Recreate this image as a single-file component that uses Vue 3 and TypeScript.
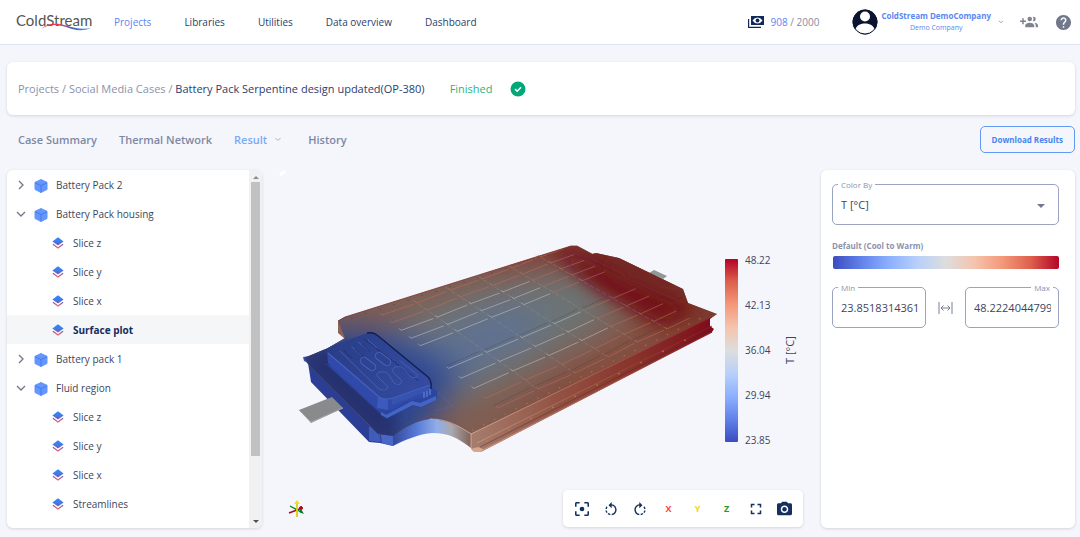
<script setup lang="ts">
import { ref } from 'vue'

interface TreeItem { id: number; label: string; kind: 'solid' | 'plot'; open?: boolean }

const navItems = ['Projects', 'Libraries', 'Utilities', 'Data overview', 'Dashboard']
const tabs = ['Case Summary', 'Thermal Network', 'Result', 'History']
const treeItems: TreeItem[] = [
  { id: 1, label: 'Battery Pack 2', kind: 'solid' },
  { id: 2, label: 'Battery Pack housing', kind: 'solid', open: true },
  { id: 3, label: 'Slice z', kind: 'plot' },
  { id: 4, label: 'Slice y', kind: 'plot' },
  { id: 5, label: 'Slice x', kind: 'plot' },
  { id: 6, label: 'Surface plot', kind: 'plot' },
  { id: 7, label: 'Battery pack 1', kind: 'solid' },
  { id: 8, label: 'Fluid region', kind: 'solid', open: true },
  { id: 9, label: 'Slice z', kind: 'plot' },
  { id: 10, label: 'Slice y', kind: 'plot' },
  { id: 11, label: 'Slice x', kind: 'plot' },
  { id: 12, label: 'Streamlines', kind: 'plot' },
]
const selected = ref(6)
const colorBy = ref('T [°C]')
const minValue = ref('23.8518314361')
const maxValue = ref('48.2224044799')

const ticks = ['48.22', '42.13', '36.04', '29.94', '23.85']
const coolWarm = ['#3b4cc0', '#6282ea', '#8db0fe', '#b8d0f9', '#dddddd', '#f5c4ad', '#f4987a', '#de604d', '#b40426']

// Embossed ribs on the lid: interpolated between its back and front rows.
type Pt = [number, number]
const back: Pt[] = [[382, 315], [417, 303], [450, 290], [482, 279], [512, 268], [540, 257], [566, 248]]
const front: Pt[] = [[498, 408], [538, 389], [575, 373], [608, 357], [637, 342], [667, 329], [692, 317]]
const rows = [0, 0.083, 0.165, 0.25, 0.33, 0.574, 0.68, 0.79, 0.895, 1]
const at = (c: number, t: number): Pt => [
  back[c][0] + (front[c][0] - back[c][0]) * t,
  back[c][1] + (front[c][1] - back[c][1]) * t,
]
const ribs: { d: string; soft: boolean }[] = []
for (let c = 0; c < 6; c++) {
  rows.forEach((t, r) => {
    const a = at(c, t)
    const b = at(c + 1, t)
    const x = a[0] + (b[0] - a[0]) * 0.9
    const y = a[1] + (b[1] - a[1]) * 0.9
    ribs.push({ d: `M${a[0] - 2} ${a[1] - 2}L${a[0]} ${a[1]}L${x} ${y}`, soft: r < 2 || r > 7 || c > 3 })
  })
}
const seams = [1, 2, 3, 4, 5].map((c) => {
  const a = at(c, -0.04)
  const b = at(c, 1)
  return `M${a[0]} ${a[1]}L${b[0]} ${b[1]}`
})
const creases = [0, 1, 2, 3, 4, 5].flatMap((c) => [0.55, 0.97].map((t) => {
  const a = at(c, t)
  const b = at(c + 1, t)
  return `M${a[0]} ${a[1]}L${b[0] - 4} ${b[1] + 1}`
}))
const bolts: Pt[] = Array.from({ length: 22 }, (_, i) => [473 + i * 10.8, 430 - i * 5.3])
const flangeBolts: Pt[] = Array.from({ length: 10 }, (_, i) => [487 + i * 22, 441 - i * 11.2])
const backBolts: Pt[] = Array.from({ length: 15 }, (_, i) => [352 + i * 14, 318 - i * 4.5])
const capsules = ['M364 361L372 367', 'M379 356L387 362']
</script>

<template>
  <div class="app">
    <header class="topbar">
      <a class="logo" href="#" aria-label="ColdStream">
        <svg viewBox="0 0 76 20" width="76" height="20">
          <defs>
            <linearGradient id="swoosh"><stop offset="0" stop-color="#ee2436" /><stop offset=".4" stop-color="#d94a5c" /><stop offset=".62" stop-color="#3f62b5" /><stop offset="1" stop-color="#4b9be8" /></linearGradient>
          </defs>
          <text x="0" y="14" class="logo-text">ColdStream</text>
          <path d="M25 17C32 12 41 12 50 15C58 18 66 20 75 16C66 18 58 16 50 13.500C41 10.500 31 11 25 17Z" fill="url(#swoosh)" />
        </svg>
      </a>
      <nav class="nav">
        <a v-for="(item, i) in navItems" :key="item" href="#" :class="{ active: i === 0 }">{{ item }}</a>
      </nav>
      <div class="credits">
        <svg viewBox="0 0 16 12" width="16" height="12">
          <path d="M3 0H16V9H3Z" fill="#12295c" />
          <path d="M4.500 4.500Q6.500 1.500 9.500 1.500T14.500 4.500Q12.500 7.500 9.500 7.500T4.500 4.500Z" fill="#fff" />
          <circle cx="9.500" cy="4.500" r="1.900" fill="#12295c" />
          <path d="M.6 3V11.400H13" fill="none" stroke="#12295c" stroke-width="1.200" />
        </svg>
        <span><b>908</b> / 2000</span>
      </div>
      <button class="account" type="button">
        <svg viewBox="0 0 26 26" width="26" height="26">
          <circle cx="13" cy="13" r="12.400" fill="#0a1430" />
          <circle cx="13" cy="7.500" r="5" fill="#fff" />
          <path d="M3 20.500C5 16 9 14.500 13 14.500S21 16 23 20.500C20.500 24 17 25 13 25S5.500 24 3 20.500Z" fill="#fff" />
          <circle cx="13" cy="13" r="12" fill="none" stroke="#0a1430" />
        </svg>
        <span class="who"><span>ColdStream DemoCompany</span><small>Demo Company</small></span>
        <svg class="caret" viewBox="0 0 6 4" width="6" height="4"><path d="M1 .8L3 2.800L5 .8" fill="none" stroke="#9a9ead" /></svg>
      </button>
      <button class="bare" type="button" aria-label="Add people">
        <svg viewBox="0 4 24 16" width="18" height="12"><path fill="#7d8294" d="M19 17V19H7V17S7 13 13 13 19 17 19 17M16 8A3 3 0 1 0 13 11A3 3 0 0 0 16 8M19.200 13.060A5.600 5.600 0 0 1 21 17V19H24V17S24 13.550 19.200 13.060M18 5A2.910 2.910 0 0 0 17.110 5.140A5 5 0 0 1 17.110 10.860A2.910 2.910 0 0 0 18 11A3 3 0 0 0 18 5M8 10H5V7H3V10H0V12H3V15H5V12H8Z" /></svg>
      </button>
      <button class="bare" type="button" aria-label="Help">
        <svg viewBox="2 2 20 20" width="15" height="15"><path fill="#72788b" d="M12 2C6.480 2 2 6.480 2 12s4.480 10 10 10 10-4.480 10-10S17.520 2 12 2zm1 17h-2v-2h2v2zm2.070-7.750l-.9.920C13.450 12.900 13 13.500 13 15h-2v-.5c0-1.100.450-2.100 1.170-2.830l1.240-1.260c.370-.360.590-.860.590-1.410 0-1.100-.9-2-2-2s-2 .9-2 2H8c0-2.210 1.790-4 4-4s4 1.790 4 4c0 .880-.360 1.680-.930 2.250z" /></svg>
      </button>
    </header>

    <main class="page">
      <section class="card crumbs">
        <p><a href="#">Projects</a> / <a href="#">Social Media Cases</a> / <strong>Battery Pack Serpentine design updated(OP-380)</strong></p>
        <span class="status">Finished</span>
        <svg viewBox="0 0 16 16" width="16" height="16"><circle cx="8" cy="8" r="7.500" fill="#00a878" /><path d="M5 8.200L7.200 10.200L11 6.200" fill="none" stroke="#fff" stroke-width="1.600" /></svg>
      </section>

      <div class="tabbar">
        <nav class="tabs">
          <a v-for="tab in tabs" :key="tab" href="#" :class="{ active: tab === 'Result' }">{{ tab }}<svg v-if="tab === 'Result'" viewBox="0 0 8 5" width="8" height="5"><path d="M1.500 1L4 3.500L6.500 1" fill="none" stroke="#a9b0c4" /></svg></a>
        </nav>
        <button class="download" type="button">Download Results</button>
      </div>

      <div class="workspace">
        <aside class="card tree">
          <ul>
            <li v-for="item in treeItems" :key="item.id">
              <button type="button" :class="[item.kind, { selected: item.id === selected }]" @click="selected = item.id">
                <template v-if="item.kind === 'solid'">
                  <svg viewBox="0 0 10 10" width="10" height="10"><path :d="item.open ? 'M1 3L5 7L9 3' : 'M3 1L7 5L3 9'" fill="none" stroke="#70778d" stroke-width="1.300" /></svg>
                  <svg class="cube" viewBox="0 0 14 14" width="14" height="14"><path d="M7 .5L13 3.300V10.500L7 13.500L1 10.500V3.300Z" fill="#6396ff" stroke="#6396ff" stroke-linejoin="round" /><path d="M1 3.800L7 6.600L13 3.800M7 6.600V13.500" fill="none" stroke="#3f76e4" stroke-width=".8" /></svg>
                </template>
                <svg v-else class="layers" viewBox="0 0 12 12" width="12" height="12">
                  <defs><linearGradient :id="`layer${item.id}`" x1="0" y1="0" x2="0" y2="12" gradientUnits="userSpaceOnUse"><stop offset=".3" stop-color="#3582f6" /><stop offset=".6" stop-color="#6a63bd" /><stop offset=".9" stop-color="#f05a64" /></linearGradient></defs>
                  <path d="M6 .3L11.600 4.500L6 8.600L.4 4.500Z" :fill="`url(#layer${item.id})`" /><path d="M.9 7.300L6 11L11.100 7.300" fill="none" :stroke="`url(#layer${item.id})`" stroke-width="1.200" />
                </svg>
                <span>{{ item.label }}</span>
              </button>
            </li>
          </ul>
          <div class="scroll" aria-hidden="true">
            <i class="up"></i><div class="thumb"></div><i class="down"></i>
          </div>
        </aside>

        <section class="viewer">
          <svg class="scene" viewBox="262 170 559 358" role="img" aria-label="Surface temperature of the battery pack housing">
            <defs>
              <clipPath id="lid"><path d="M338 321L345 317L571 246H577L592 254L596 253L619 258L683 289L688 303L717 314L710 318L471 434C459 426 447 420 430 419C417 420 404 428 393 436L378 434L371 427L308 364L304 358L328 348L345 338Z" /></clipPath>
              <filter id="b18" x="-50%" y="-50%" width="200%" height="200%"><feGaussianBlur stdDeviation="16" /></filter>
              <filter id="b8" x="-50%" y="-50%" width="200%" height="200%"><feGaussianBlur stdDeviation="8" /></filter>
              <linearGradient id="side" x1="471" y1="0" x2="712" y2="0" gradientUnits="userSpaceOnUse"><stop offset="0" stop-color="#a67d6d" /><stop offset=".35" stop-color="#925444" /><stop offset=".7" stop-color="#873129" /><stop offset="1" stop-color="#7e0c1b" /></linearGradient>
              <linearGradient id="rim" x1="471" y1="0" x2="712" y2="0" gradientUnits="userSpaceOnUse"><stop offset="0" stop-color="#cd9f8a" /><stop offset=".5" stop-color="#a65d49" /><stop offset="1" stop-color="#8c1824" /></linearGradient>
              <linearGradient id="notch" x1="392" y1="0" x2="471" y2="0" gradientUnits="userSpaceOnUse"><stop offset="0" stop-color="#304797" /><stop offset=".3" stop-color="#5578d5" /><stop offset=".57" stop-color="#8faeea" /><stop offset=".75" stop-color="#aaa9ae" /><stop offset="1" stop-color="#806257" /></linearGradient>
              <linearGradient id="pod" x1="330" y1="338" x2="425" y2="390" gradientUnits="userSpaceOnUse"><stop offset="0" stop-color="#293d86" /><stop offset="1" stop-color="#344ba0" /></linearGradient>
              <linearGradient id="bar" x1="0" y1="1" x2="0" y2="0"><stop v-for="(c, i) in coolWarm" :key="c" :offset="i / 8" :stop-color="c" /></linearGradient>
            </defs>

            <path d="M279 173L286 170V172L281 176Z" fill="#fff" />
            <path d="M649 273L654 270L667 276L663 279Z" fill="#8f9895" />
            <path d="M338 321V333L345 339L349 334Q343 326 345 317Z" fill="#8c6455" />
            <path d="M308 363L371 427L378 434L393 435V446L380 443L369 442L311 382Z" fill="#2b3e94" />
            <path d="M303 357L310 356V364L304 361Z" fill="#3957bd" />
            <path d="M369 427L378 426L381 442L369 441Z" fill="#405cbb" />
            <path d="M380 430L393 433V446L382 443Z" fill="#4867c7" />
            <path d="M393 433C404 426 417 419 430 418C447 419 459 424 471 434V448C458 438 448 433 433 433C418 434 405 440 393 446Z" fill="url(#notch)" />
            <path d="M471 434L717 314L710 319V326L714 329L712 332L481 452L473 451L471 448Z" fill="url(#side)" />

            <g clip-path="url(#lid)">
              <rect x="300" y="240" width="420" height="215" fill="#815d50" />
              <g filter="url(#b18)">
                <path d="M355 340L480 288L575 272L618 312L550 355L460 404L390 400Z" fill="#6c7475" />
                <path d="M410 345L500 308L550 313L530 339L460 382Z" fill="#5f7192" />
                <path d="M290 335L350 328L400 333L462 370L440 412L400 455H300Z" fill="#2b4693" />
                <path d="M530 232L600 235L740 310L700 345L645 315L580 272Z" fill="#701c1b" />
                <path d="M430 273L570 228L585 259L510 266Z" fill="#812a22" />
                <path d="M490 436L720 320L700 303L560 378Z" fill="#85402f" />
              </g>
              <path d="M548 248L592 262L690 312L662 322L600 290Z" fill="#740913" filter="url(#b8)" />
              <path d="M605 262L640 262L680 286L684 300L622 278Z" fill="#732720" filter="url(#b8)" />
              <path d="M300 352L335 345L395 405L400 446L370 440L310 382Z" fill="#25336f" filter="url(#b8)" />
            </g>

            <g fill="none">
              <path v-for="s in seams" :key="s" :d="s" stroke="#b3a398" stroke-opacity=".35" stroke-dasharray="5 2" stroke-width=".7" />
              <path v-for="s in creases" :key="s" :d="s" stroke="#303547" stroke-opacity=".6" stroke-dasharray="2 1" stroke-width=".6" />
              <path v-for="rib in ribs" :key="rib.d" :d="rib.d" :stroke="rib.soft ? '#b8705f' : '#c0bcbb'" :stroke-opacity="rib.soft ? 0.6 : 0.65" stroke-width=".9" />
              <path d="M338 321L345 317L571 246H577L592 254" stroke="#7d3229" stroke-opacity=".8" />
              <path d="M471 434L710 318" stroke="url(#rim)" />
              <path d="M477 443L712 326" stroke="url(#rim)" stroke-width=".8" />
              <path d="M480 447L713 329" stroke="#552a29" stroke-opacity=".6" stroke-width=".8" />
              <path d="M481 451L712 332" stroke="url(#rim)" stroke-width="1.200" />
              <path d="M471 448V434C459 426 447 419 430 419" stroke="#d7b39f" stroke-width=".8" />
              <path d="M435 411L453 406L430 386" stroke="#5c70a5" stroke-opacity=".6" stroke-width=".7" stroke-dasharray="3 1" />
              <path d="M621 276L684 303M592 259L625 275M660 286L684 291" stroke="#8d3932" stroke-width=".6" stroke-opacity=".5" />
            </g>
            <path d="M471 449L478 447L483 449L481 452H474Z" fill="#d7a68f" />
            <circle v-for="b in bolts" :key="b[0]" :cx="b[0]" :cy="b[1]" r=".7" fill="#a87464" />
            <circle v-for="b in flangeBolts" :key="b[0]" :cx="b[0]" :cy="b[1]" r=".8" fill="#bd7b67" />
            <circle v-for="b in backBolts" :key="b[0]" :cx="b[0]" :cy="b[1]" r=".6" fill="#613b33" />

            <path d="M325 363L383 416L387 419L413 403L421 405L437 398V391L428 384L390 393Z" fill="#2b469f" />
            <path d="M381 412L386 415L412 401L420 403L436 396V400L421 407L413 405L387 418L381 415Z" fill="#4564c7" />
            <path d="M327 350L379 397L393 398L431 382L432 391L428 396L405 402L392 410L377 409L328 363Z" fill="#314aaa" />
            <path d="M378 396L388 398V410L377 408Z" fill="#3c59bd" />
            <path d="M391 398L431 383V390L392 405Z" fill="#3653b1" />
            <path d="M327 350Q328 347 332 346L367 333Q373 332 377 335L428 377Q433 382 430 386L393 398Q383 401 378 396L328 353Z" fill="url(#pod)" />
            <path d="M328 353L378 396Q383 401 393 398L430 385" fill="none" stroke="#4461bd" stroke-width="1.200" />
            <path d="M367 333Q373 332 377 335L428 377Q432 381 431 389" fill="none" stroke="#121d4d" stroke-width="1.300" />
            <path d="M364 339L419 381" fill="none" stroke="#19295e" stroke-dasharray="2 1" />
            <g fill="none" stroke-linecap="round">
              <path v-for="s in capsules" :key="s" :d="s" stroke="#4a68c4" stroke-width="8" />
              <path v-for="s in capsules" :key="s" :d="s" stroke="#2d438f" stroke-width="6.500" />
              <g stroke="#4660b8" stroke-width=".9">
                <path d="M340 351L379 389Q386 392 388 387L378 377Q375 373 380 372Q386 371 389 375L394 383Q400 387 402 381L393 372Q391 369 395 367Q400 365 404 369L411 377Q417 379 418 375L400 361" />
                <path d="M352 347L361 355M358 342L369 350M368 340L377 348" />
              </g>
              <path d="M344 351L352 358M355 349L363 356M362 344L370 351" stroke="#1f306f" stroke-width=".8" />
            </g>
            <path d="M424 392V398M427 391V397M430 389V395" stroke="#6380d5" stroke-width="1.200" />
            <path d="M299 410L332 397L343 408L311 423Z" fill="#898a8b" /><path d="M299 410L311 422L343 408" fill="none" stroke="#a3a4a5" />

            <rect x="725" y="259" width="13" height="183" rx="1" fill="url(#bar)" />
            <text v-for="(t, i) in ticks" :key="t" x="745" :y="264 + i * 45" class="tick">{{ t }}</text>
            <text transform="translate(794 364) rotate(-90)" class="axis">T [°C]</text>

            <g fill="none" stroke-width="1.400">
              <path d="M289 513L302 508" stroke="#9e0c1c" /><path d="M290 506L301 512" stroke="#0b7a22" /><path d="M297 517V503" stroke="#d9cf16" stroke-width="1.800" />
              <circle cx="301" cy="508" r="1.500" fill="#b00a18" stroke="#b00a18" stroke-width="1" />
            </g>
            <path d="M299 512L304 514L301 509Z" fill="#087127" /><path d="M294 504L297 500L300 504Z" fill="#eee117" />
          </svg>

          <div class="toolbar" role="toolbar" aria-label="View controls">
            <button type="button" aria-label="Fit to view"><svg viewBox="3 3 18 18" width="14" height="14"><circle cx="12" cy="12" r="3" /><path d="M5 15H3v4c0 1.100.9 2 2 2h4v-2H5v-4zM5 5h4V3H5c-1.100 0-2 .9-2 2v4h2V5zm14-2h-4v2h4v4h2V5c0-1.100-.9-2-2-2zm0 16h-4v2h4c1.100 0 2-.9 2-2v-4h-2v4z" /></svg></button>
            <button type="button" aria-label="Rotate left"><svg viewBox="2 1 20 20" width="14" height="14"><path d="M7.110 8.530L5.700 7.110C4.800 8.270 4.240 9.610 4.070 11h2.020c.14-.87.49-1.720 1.020-2.470zM6.090 13H4.070c.17 1.390.72 2.730 1.620 3.890l1.410-1.420c-.52-.75-.87-1.590-1.010-2.470zm1.010 5.320c1.160.9 2.510 1.440 3.900 1.610V17.900c-.87-.15-1.710-.49-2.460-1.030L7.100 18.320zM13 4.070V1L8.450 5.550 13 10V6.090c2.840.48 5 2.940 5 5.910s-2.160 5.430-5 5.910v2.020c3.950-.49 7-3.850 7-7.930s-3.050-7.440-7-7.930z" /></svg></button>
            <button type="button" aria-label="Rotate right"><svg viewBox="2 1 20 20" width="14" height="14"><path transform="translate(24 0) scale(-1 1)" d="M7.110 8.530L5.700 7.110C4.800 8.270 4.240 9.610 4.070 11h2.020c.14-.87.49-1.720 1.020-2.470zM6.090 13H4.070c.17 1.390.72 2.730 1.620 3.890l1.410-1.420c-.52-.75-.87-1.590-1.010-2.470zm1.010 5.320c1.160.9 2.510 1.440 3.900 1.610V17.900c-.87-.15-1.710-.49-2.460-1.030L7.100 18.320zM13 4.070V1L8.450 5.550 13 10V6.090c2.840.48 5 2.940 5 5.910s-2.160 5.430-5 5.910v2.020c3.950-.49 7-3.850 7-7.930s-3.050-7.440-7-7.930z" /></svg></button>
            <button type="button" class="x">X</button>
            <button type="button" class="y">Y</button>
            <button type="button" class="z">Z</button>
            <button type="button" aria-label="Full screen"><svg viewBox="4 4 16 16" width="12" height="12"><path d="M7 14H5v5h5v-2H7v-3zm-2-4h2V7h3V5H5v5zm12 7h-3v2h5v-5h-2v3zM14 5v2h3v3h2V5h-5z" /></svg></button>
            <button type="button" aria-label="Take snapshot"><svg viewBox="2 1 20 20" width="15" height="15"><path fill-rule="evenodd" d="M9 2L7.170 4H4c-1.100 0-2 .9-2 2v12c0 1.100.9 2 2 2h16c1.100 0 2-.9 2-2V6c0-1.100-.9-2-2-2h-3.170L15 2H9zm3 15c-2.760 0-5-2.240-5-5s2.240-5 5-5 5 2.240 5 5-2.240 5-5 5z" /><circle cx="12" cy="12" r="3" /></svg></button>
          </div>
        </section>

        <aside class="card settings">
          <div class="field">
            <label for="colorBy">Color By</label>
            <select id="colorBy" v-model="colorBy"><option>T [°C]</option></select>
            <i class="arrow" aria-hidden="true"></i>
          </div>
          <h2>Default (Cool to Warm)</h2>
          <div class="ramp"></div>
          <div class="range">
            <div class="field"><label for="min">Min</label><input id="min" v-model="minValue" type="text"></div>
            <button class="bare" type="button" aria-label="Fit range to data"><svg viewBox="0 0 15 12" width="15" height="12"><path d="M1 0V12M14 0V12M3 6H12M5.500 3.500L3 6L5.500 8.500M9.500 3.500L12 6L9.500 8.500" fill="none" stroke="#777e91" /></svg></button>
            <div class="field end"><label for="max">Max</label><input id="max" v-model="maxValue" type="text"></div>
          </div>
        </aside>
      </div>
    </main>
  </div>
</template>

<style>
body { margin: 0; background: #f5f6fb; }
</style>

<style scoped>
.app { min-height: 100vh; display: flex; flex-direction: column; background: #f5f6fb; color: #3c4560; font: 10px/14px "Open Sans", "Noto Sans", sans-serif; }
.app * { box-sizing: border-box; }
button, input, select { font: inherit; color: inherit; }
button { background: none; border: 0; padding: 0; cursor: pointer; }
a { color: inherit; text-decoration: none; }
svg { display: block; flex: none; }
.topbar { height: 45px; display: flex; align-items: center; padding: 0 9px 0 16px; background: #fff; border-bottom: 1px solid #e0e3f3; }
.logo { margin-right: 22px; }
.logo-text { font: 15px Lato, sans-serif; fill: #555; }
.nav { display: flex; gap: 33px; margin-right: auto; color: #2c406e; }
.nav .active { color: #5c86f2; }
.credits { display: flex; align-items: center; gap: 6px; margin-right: 33px; color: #858b9e; }
.credits b { font-weight: 400; color: #5c86f2; }
.account { display: flex; align-items: center; gap: 3px; margin-right: 16px; color: #5c86f2; }
.who { display: flex; flex-direction: column; align-items: center; line-height: 12px; font-size: 8px; font-weight: 700; }
.who small { font-size: 7px; font-weight: 500; }
.caret { margin-left: 4px; }
.bare + .bare { margin-left: 18px; }
.page { flex: 1; display: flex; flex-direction: column; padding: 17px 5px 9px 7px; }
.card { background: #fff; border-radius: 6px; box-shadow: 0 1px 3px rgba(60, 65, 90, .18); }
.crumbs { display: flex; align-items: center; height: 53px; padding: 0 11px; font-size: 11px; color: #8b92ab; }
.crumbs p { margin: 0; }
.crumbs strong { font-weight: 400; color: #2c406e; }
.status { margin: 0 17px 0 25px; color: #1fb585; }
.tabbar { display: flex; align-items: center; justify-content: space-between; height: 27px; margin: 11px 0 17px; }
.tabs { display: flex; gap: 22px; padding-left: 11px; font-size: 11px; font-weight: 600; color: #7d88a5; }
.tabs a { display: flex; align-items: center; gap: 7px; }
.tabs .active { color: #7aa9f7; }
.tabs .active svg { margin-right: 4px; }
.download { height: 27px; padding: 0 11px; border: 1px solid #609af5; border-radius: 5px; color: #4685f0; font-size: 8px; font-weight: 700; }
.workspace { flex: 1; display: grid; grid-template-columns: 255px minmax(0, 1fr) 254px; }
.tree { display: flex; overflow: hidden; }
.tree ul { flex: 1; margin: 0; padding: 0 0 10px; list-style: none; }
.tree button { display: flex; align-items: center; width: 100%; height: 29px; padding-left: 9px; }
.tree button.plot { padding-left: 45px; gap: 9px; }
.tree button.selected { background: #f4f6f8; font-weight: 700; color: #142c60; }
.cube { margin: 2px 8px 0; }
.layers { margin-top: 1px; }
.scroll { display: flex; flex-direction: column; align-items: center; width: 13px; background: #f1f1f1; }
.up, .down { border: 3px solid transparent; }
.up { border-bottom-color: #8b8b8b; margin: 3px 0; }
.down { border-top-color: #505050; margin: auto 0 2px; }
.thumb { width: 9px; height: 274px; background: #c1c1c1; }
.viewer { position: relative; }
.scene { width: 100%; height: 100%; }
.tick { font: 10px "Open Sans", sans-serif; fill: #3c4560; }
.axis { font: 11px "Open Sans", sans-serif; fill: #3c4560; }
.toolbar { position: absolute; right: 18px; bottom: 1px; display: flex; align-items: center; height: 37px; padding: 0 4px; background: #fff; border-radius: 5px; box-shadow: 0 1px 3px rgba(60, 65, 90, .18); }
.toolbar button { display: grid; place-items: center; width: 29px; height: 29px; font-size: 9px; font-weight: 700; }
.toolbar svg { fill: #15305f; }
.toolbar .x { color: #f74444; }
.toolbar .y { color: #f3d312; }
.toolbar .z { color: #2a9b2a; }
.settings { padding: 14px 16px 14px 11px; }
.field { position: relative; height: 41px; border: 1px solid #9aa3bf; border-radius: 5px; }
.field label { position: absolute; top: -7px; left: 5px; padding: 0 3px; background: #fff; color: #8b93ad; font-size: 8px; }
.field.end label { left: auto; right: 5px; }
.field select, .field input { display: block; width: 100%; height: 100%; padding: 0 8px; border: 0; background: none; appearance: none; outline: 0; font-size: 11px; color: #3c4560; }
.field input { padding: 0 7px 0 8px; }
.arrow { position: absolute; right: 13px; top: 19px; border: 4px solid transparent; border-top-color: #71788d; border-bottom: 0; pointer-events: none; }
.settings h2 { margin: 14px 0 3px; font-size: 8px; line-height: 14px; font-weight: 700; color: #8b93ad; }
.ramp { height: 13px; margin: 0 0 18px 1px; border-radius: 2px; background: linear-gradient(to right, #3b4cc0, #6282ea, #8db0fe, #b8d0f9, #dddddd, #f5c4ad, #f4987a, #de604d, #b40426); }
.range { display: flex; align-items: center; justify-content: space-between; }
.range .field { width: 94px; }
</style>
